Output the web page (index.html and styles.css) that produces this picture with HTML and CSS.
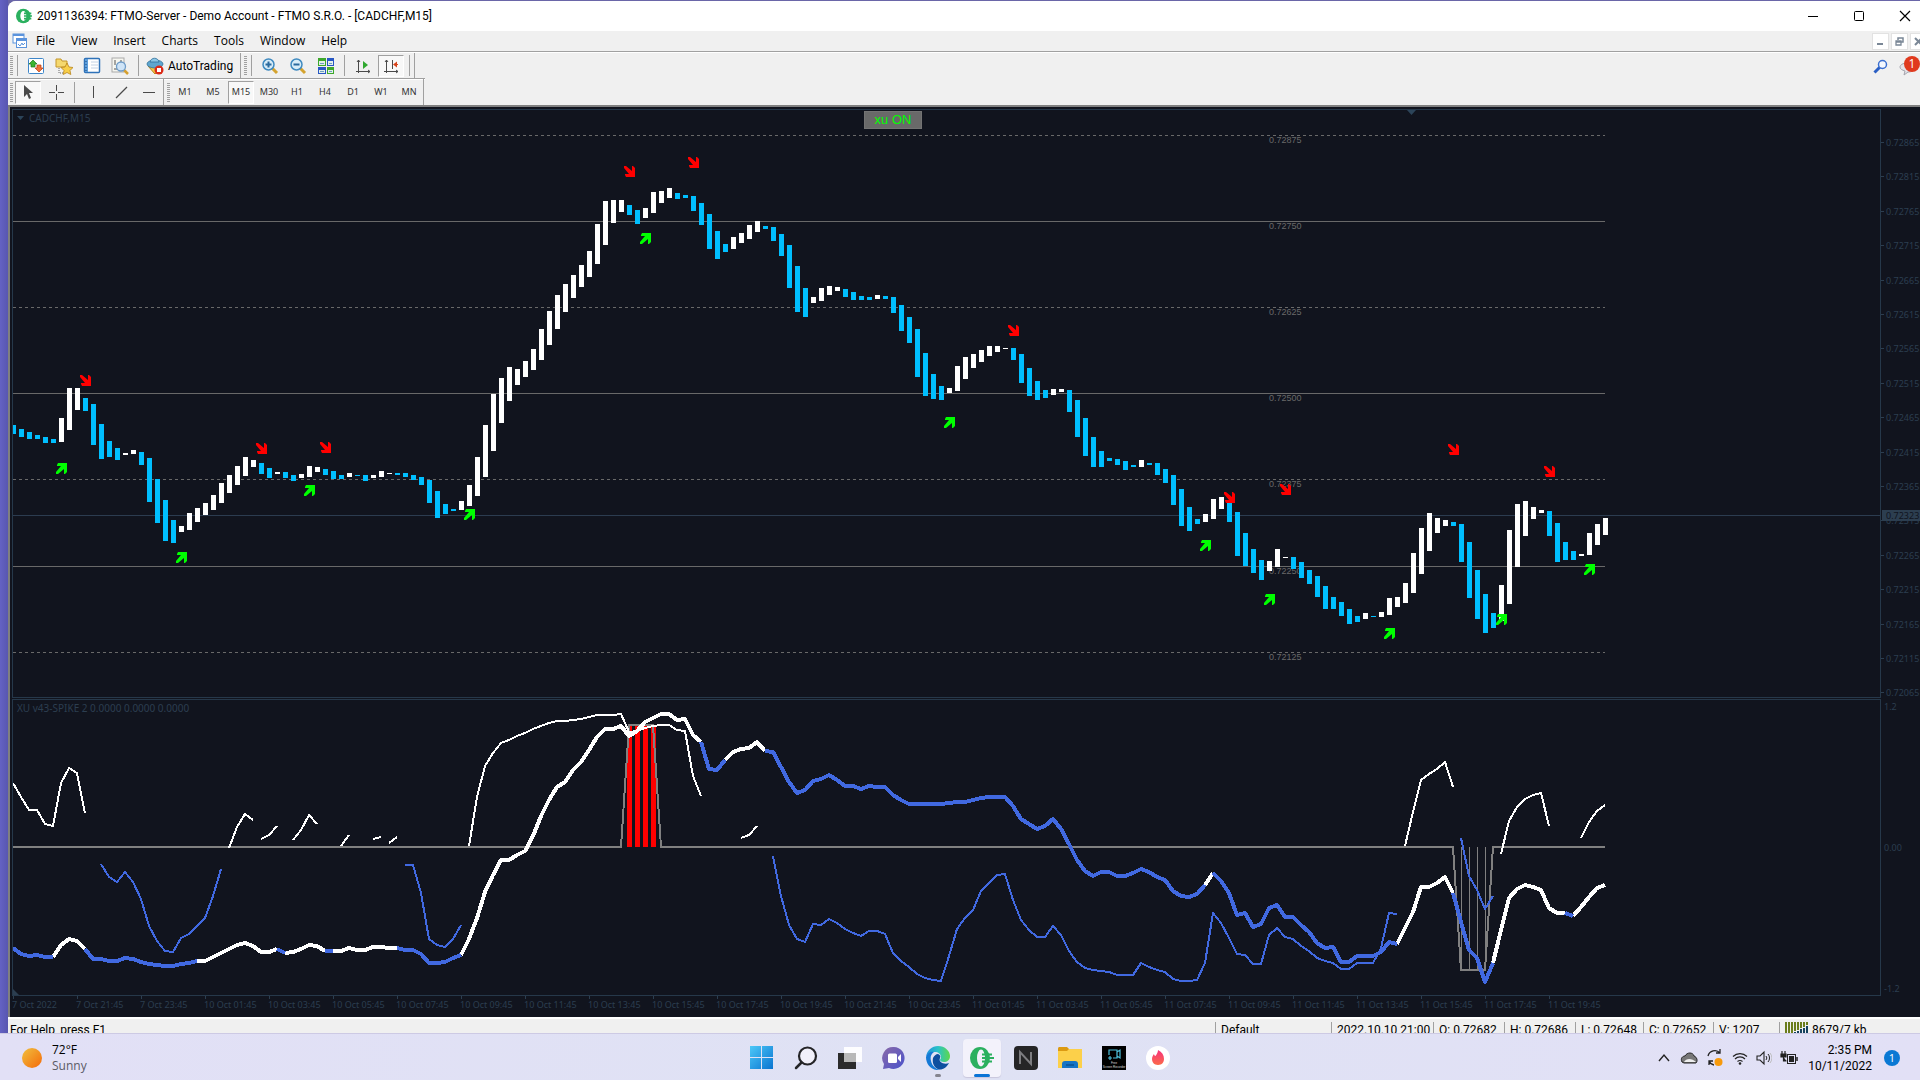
FILE: index.html
```html
<!DOCTYPE html>
<html lang="en">
<head>
<meta charset="utf-8">
<title>2091136394: FTMO-Server - Demo Account</title>
<link rel="stylesheet" href="styles.css">
</head>
<body>
<main class="window">
  <header class="titlebar">
    <svg class="app-logo" width="16" height="16" viewBox="0 0 24 24"><ellipse cx="11" cy="12" rx="11" ry="11" fill="#2bb05f"/><ellipse cx="11" cy="12" rx="4.500" ry="7.500" fill="#fff"/><path d="M12 8h11M12 12h12M12 16h11" stroke="#2bb05f" stroke-width="2.500"/></svg>
    <h1 class="title">2091136394: FTMO-Server - Demo Account - FTMO S.R.O. - [CADCHF,M15]</h1>
    <div class="caption-buttons">
      <button aria-label="Minimize"><svg width="12" height="12"><path d="M1 6.500h10" stroke="#000"/></svg></button>
      <button aria-label="Maximize"><svg width="12" height="12"><rect x="1.500" y="1.500" width="9" height="9" rx="1" fill="none" stroke="#000"/></svg></button>
      <button aria-label="Close"><svg width="12" height="12"><path d="M1 1l10 10M11 1L1 11" stroke="#000" stroke-width="1.200"/></svg></button>
    </div>
  </header>

  <nav class="menubar">
    <svg class="mdi-icon" width="16" height="16"><rect x="1" y="1" width="11" height="9" fill="#fff" stroke="#5b93dc"/><path d="M1 2h11" stroke="#5b93dc" stroke-width="2"/><rect x="4.500" y="5.500" width="10" height="9" fill="#fff" stroke="#5b93dc"/><path d="M4 7h11" stroke="#5b93dc" stroke-width="2"/><path d="M6 11l2 2 2-3 1 2 2-2" fill="none" stroke="#5b93dc"/></svg>
    <button>File</button><button>View</button><button>Insert</button><button>Charts</button><button>Tools</button><button>Window</button><button>Help</button>
    <div class="mdi-buttons">
      <button aria-label="Minimize chart"><svg width="9" height="9"><path d="M1 7h6" stroke="#7a8796" stroke-width="2"/></svg></button>
      <button aria-label="Restore chart"><svg width="9" height="9"><path d="M3 3V1h5v4H6" fill="none" stroke="#7a8796" stroke-width="1.500"/><path d="M1 4h5v4H1zM1 5h5" fill="none" stroke="#7a8796" stroke-width="1.300"/></svg></button>
      <button aria-label="Close chart"><svg width="9" height="9"><path d="M1 1l7 7M8 1L1 8" stroke="#7a8796" stroke-width="2"/></svg></button>
    </div>
  </nav>

  <div class="toolbars">
    <div class="toolbar standard">
      <span class="grip"></span><span class="sep"></span>
      <button class="tool" aria-label="Market watch"><svg width="18" height="18"><rect x="1.500" y="1.500" width="15" height="15" rx="1" fill="#fff" stroke="#3f86c8"/><path d="M6 3l4 4H8v3H4V7H2z" fill="#3cb531" stroke="#1c7a1a" stroke-width=".7"/><path d="M12 15l-4-4h2V8h4v3h2z" fill="#f0713a" stroke="#b83a10" stroke-width=".7"/></svg></button>
      <button class="tool" aria-label="Navigator"><svg width="18" height="18"><path d="M1 2h5l1 2h5v6H1z" fill="#f5d86e" stroke="#c4962a"/><path d="M4 11v5h4" fill="none" stroke="#666" stroke-dasharray="1 1"/><path d="M12 6l2 4 4 .5-3 3 .8 4L12 15.500 8.200 17.500 9 13.500l-3-3 4-.5z" fill="#f8cf4a" stroke="#b8841a" stroke-width=".8"/></svg></button>
      <button class="tool" aria-label="Data window"><svg width="18" height="18"><rect x="1.500" y="1.500" width="15" height="14" rx="1" fill="#fff" stroke="#2f72b8" stroke-width="1.500"/><rect x="2" y="2" width="3" height="13" fill="#5e9edb"/><path d="M8 5h7M8 8h7M8 11h7" stroke="#c3d2e4"/><path d="M3 4v10" stroke="#16447c" stroke-dasharray="1 2"/></svg></button>
      <button class="tool" aria-label="Strategy tester"><svg width="18" height="18"><rect x="1" y="1" width="12" height="14" fill="#f6f6f0" stroke="#aaa"/><path d="M4 3v5M10 3v4M3 12h4" stroke="#555"/><path d="M13 13l4 4" stroke="#d6a02e" stroke-width="2.500"/><circle cx="10" cy="9.500" r="4.500" fill="#cfe4f7" stroke="#6f9cc8" stroke-width="1.300"/></svg></button>
      <span class="sep"></span>
      <button class="tool auto"><svg width="18" height="18"><path d="M2 9l7 8 7-7z" fill="#f3c545" stroke="#b98419"/><ellipse cx="9" cy="7" rx="8" ry="4" fill="#5fa6cf" stroke="#2f7099" stroke-width=".8"/><path d="M4 5c1-5 8-5 9 0z" fill="#8cc6e6" stroke="#2f7099" stroke-width=".8"/><circle cx="13" cy="13" r="4.500" fill="#db2a18"/><rect x="11" y="11" width="4" height="4" fill="#fff"/></svg>AutoTrading</button>
      <span class="edge"></span><span class="grip"></span><span class="sep"></span>
      <button class="tool" aria-label="Zoom in"><svg width="18" height="18"><path d="M11 11l5 5" stroke="#d4a32f" stroke-width="3"/><circle cx="7.500" cy="7.500" r="5.500" fill="#d8edf8" stroke="#3f8ac0" stroke-width="1.500"/><path d="M4.500 7.500h6M7.500 4.500v6" stroke="#2a6a9e" stroke-width="2"/></svg></button>
      <button class="tool" aria-label="Zoom out"><svg width="18" height="18"><path d="M11 11l5 5" stroke="#d4a32f" stroke-width="3"/><circle cx="7.500" cy="7.500" r="5.500" fill="#d8edf8" stroke="#3f8ac0" stroke-width="1.500"/><path d="M4.500 7.500h6" stroke="#2a6a9e" stroke-width="2"/></svg></button>
      <button class="tool" aria-label="Tile windows"><svg width="18" height="18"><path d="M1 1h8v8H1zM10 10h7v7h-7z" fill="#3da82b"/><path d="M10 1h7v8h-7zM1 10h8v7H1z" fill="#2857c4"/><path d="M2 4h6v4H2zM11 4h5v4h-5zM2 13h6v3H2zM11 13h5v3h-5z" fill="#e4f0ea"/><path d="M3 6.500h4M12 6.500h3M3 14.500h4M12 14.500h3" stroke="#6f9fc0"/></svg></button>
      <span class="sep"></span>
      <button class="tool" aria-label="Auto scroll"><svg width="18" height="18"><path d="M4.500 3v13M2 14.500h14M3 5l1.500-2L6 5M14 13l2 1.500-2 1.500" fill="none" stroke="#4a4a4a"/><path d="M9 4l5 4-5 4z" fill="#2fa82f"/></svg></button>
      <button class="tool pressed" aria-label="Chart shift"><svg width="18" height="18"><path d="M4.500 3v13M2 14.500h14M3 5l1.500-2L6 5M14 13l2 1.500-2 1.500M10.500 3v9" fill="none" stroke="#4a4a4a"/><path d="M11 7.500l4-3v6z" fill="#d8431b"/><path d="M12 7.500h4" stroke="#d8431b"/></svg></button>
      <span class="sep"></span><span class="edge"></span>
    </div>
    <div class="toolbar drawing">
      <span class="grip"></span>
      <button class="tool pressed" aria-label="Cursor"><svg width="18" height="18"><path d="M5 2v12l3-3 2 5 2-1-2-5h4z" fill="#4a4a4a"/></svg></button>
      <button class="tool" aria-label="Crosshair"><svg width="18" height="18"><path d="M9.500 2v6M9.500 11v6M2 9.500h6M11 9.500h6" stroke="#4a4a4a"/></svg></button>
      <span class="sep"></span>
      <button class="tool" aria-label="Vertical line"><svg width="18" height="18"><path d="M9.500 3v12" stroke="#4a4a4a"/></svg></button>
      <button class="tool" aria-label="Trendline"><svg width="18" height="18"><path d="M4 15L15 4" stroke="#4a4a4a" stroke-width="1.300"/></svg></button>
      <button class="tool" aria-label="Horizontal line"><svg width="18" height="18"><path d="M3 9.500h12" stroke="#4a4a4a"/></svg></button>
      <span class="edge"></span><span class="grip"></span>
      <button class="tool">M1</button><button class="tool">M5</button><button class="tool pressed">M15</button><button class="tool">M30</button><button class="tool">H1</button><button class="tool">H4</button><button class="tool">D1</button><button class="tool">W1</button><button class="tool">MN</button>
      <span class="edge"></span>
    </div>
    <div class="side-tools">
      <button aria-label="Search"><svg width="16" height="16"><path d="M1.500 13.500L7 8" stroke="#2a5fc4" stroke-width="3"/><circle cx="9.500" cy="5.500" r="4" fill="#f4f8ff" stroke="#3b6fd0" stroke-width="1.500"/></svg></button>
      <button class="messages" aria-label="Messages"><svg width="20" height="20"><path d="M8 6c4 0 7 2 7 5s-3 4-6 4l-4 3 1-4C3 13 1 12 1 10s3-4 7-4z" fill="#e4e4ea" stroke="#a5a5ad"/></svg><span class="count">1</span></button>
    </div>
  </div>

  <section class="chart">
    <div class="panel price">
      <div class="panel-head"><svg width="8" height="5"><path d="M0 0h7L3.500 4z" fill="#2c4459"/></svg>CADCHF,M15</div>
      <svg id="price-plot" class="plot"></svg>
      <button class="xu">xu ON</button>
      <svg class="shift-mark" width="10" height="5"><path d="M0 0h9L4.500 5z" fill="#2c4459"/></svg>
    </div>
    <svg id="price-axis" class="axis"></svg>
    <div class="panel spike">
      <div class="panel-head">XU v43-SPIKE 2 0.0000 0.0000 0.0000</div>
      <svg id="spike-plot" class="plot"></svg>
    </div>
    <svg id="spike-axis" class="axis"></svg>
    <svg id="time-axis" class="time-axis"></svg>
  </section>

  <footer class="status">
    <span class="help">For Help, press F1</span>
    <span class="cell profile">Default</span>
    <span class="cell date">2022.10.10 21:00</span>
    <span class="cell open">O: 0.72682</span>
    <span class="cell open">H: 0.72686</span>
    <span class="cell low">L: 0.72648</span>
    <span class="cell close">C: 0.72652</span>
    <span class="cell volume">V: 1207</span>
    <span class="cell traffic"><svg width="24" height="16"><path d="M1 0v16M4 0v13M7 0v11M10 0v9M13 0v8M16 0v6M19 0v5M22 0v3" stroke="#6b7d1c" stroke-width="2"/><path d="M4 14v2M7 12v4M10 10v6M13 9v7M16 7v9M19 6v10M22 4v12" stroke="#16425f" stroke-width="2"/></svg>8679/7 kb</span>
  </footer>
</main>

<footer class="taskbar">
  <button class="weather"><span class="sun"></span><span class="weather-text"><span>72°F</span><span class="muted">Sunny</span></span></button>
  <div class="apps">
    <button aria-label="Start"><svg width="24" height="24"><defs><linearGradient id="win" x1="0" y1="0" x2="1" y2="1"><stop offset="0" stop-color="#4cc8f8"/><stop offset="1" stop-color="#0a74d0"/></linearGradient></defs><path d="M0 0h11v11H0zM12 0h11v11H12zM0 12h11v11H0zM12 12h11v11H12z" fill="url(#win)"/></svg></button>
    <button aria-label="Search"><svg width="24" height="24"><circle cx="13.500" cy="10" r="8.500" fill="#f1f0fa" stroke="#252528" stroke-width="2.200"/><path d="M7.500 16.500L2 22" stroke="#252528" stroke-width="2.500" stroke-linecap="round"/></svg></button>
    <button aria-label="Task view"><svg width="24" height="24"><rect x="0" y="7" width="18" height="16" fill="#2c2c2c"/><rect x="6" y="1" width="18" height="15" fill="#fff" opacity=".92"/><rect x="6" y="7" width="12" height="9" fill="#b9b9b9"/></svg></button>
    <button aria-label="Chat"><svg width="24" height="24"><defs><linearGradient id="chat" x1="0" y1="0" x2="1" y2="1"><stop offset="0" stop-color="#8a6aa8"/><stop offset="1" stop-color="#4a52cc"/></linearGradient></defs><path d="M12 1a11 11 0 1 1-5 21L1 23l1-5A11 11 0 0 1 12 1z" fill="url(#chat)"/><rect x="6" y="7.500" width="9" height="9.500" rx="1.500" fill="#fff"/><path d="M16 11l3-3v8l-3-3z" fill="#fff"/></svg></button>
    <button class="running" aria-label="Edge"><svg width="24" height="24"><defs><linearGradient id="edge" x1="0" y1="0" x2="1" y2="0"><stop offset="0" stop-color="#1f8fdd"/><stop offset=".5" stop-color="#2ac3c8"/><stop offset="1" stop-color="#5fd84a"/></linearGradient></defs><path d="M0 11C1 4 6 0 12 0c7 0 12 5 12 10 0 4-3 6-6 6-2 0-4-1-4-2s1-1 1-3c0-3-3-5-6-5-4 0-8 2-9 5z" fill="url(#edge)"/><path d="M0 11c1-4 5-6 8-5-3 2-4 5-3 9 1 5 5 8 9 9C6 25 0 19 0 11z" fill="#1479d6"/><path d="M7 12c1-2 3-4 5-4 2 1 3 2 2 4-2 4 4 7 9 5-2 4-6 7-10 6.500C8 22 6 17 7 12z" fill="#0d4f9f"/></svg></button>
    <button class="active" aria-label="FTMO MetaTrader"><svg width="24" height="24"><ellipse cx="10" cy="12" rx="10" ry="11" fill="#2bb05f"/><ellipse cx="11" cy="12" rx="4" ry="8.500" fill="#f1f0fa"/><path d="M12 8.500h10M12 12h12M12 15.500h10M17 6v12" stroke="#2bb05f" stroke-width="1.800"/></svg></button>
    <button aria-label="NinjaTrader"><svg width="24" height="24"><rect width="24" height="24" rx="4" fill="#252526"/><path d="M6 18V6l11 12V6" fill="none" stroke="#7d7d80" stroke-width="2"/></svg></button>
    <button aria-label="File Explorer"><svg width="24" height="24"><path d="M0 3c0-2 1-2 2-2h7l2 2v6H0z" fill="#dc9a12"/><path d="M0 5h9l2-2h13v19H0z" fill="#fcd04a"/><path d="M4 22v-4c0-2 1-3 3-3h10c2 0 3 1 3 3v4z" fill="#1674c4"/><path d="M8 19h8" stroke="#0c5292" stroke-width="1.500"/></svg></button>
    <button aria-label="Free Screen Recorder"><svg class="recorder" width="24" height="24"><rect width="24" height="24" fill="#000"/><path d="M7 9V4h8v8h-4M15 6l3-2v8l-3-2M8 10v4M6 12h4" fill="none" stroke="#4cc0dc" stroke-width="1.200"/><text x="12" y="18" text-anchor="middle" font-size="3" fill="#ddd">Free</text><text x="12" y="22" text-anchor="middle" font-size="3" fill="#ddd">Screen Recorder</text></svg></button>
    <button aria-label="Tinder"><svg width="24" height="24"><defs><linearGradient id="flame" x1="0" y1="0" x2="0" y2="1"><stop offset="0" stop-color="#f7327c"/><stop offset="1" stop-color="#fb6a4a"/></linearGradient></defs><circle cx="12" cy="12" r="12" fill="#fff"/><path d="M12 4c4 2 6 5 6 9 0 3-2 6-6 6s-6-3-6-6c0-2 1-4 2-5 0 1 1 2 1.500 2C11 8 12 6 12 4z" fill="url(#flame)"/></svg></button>
  </div>
  <div class="tray">
    <button aria-label="Show hidden icons"><svg width="16" height="16"><path d="M3 11l5-6 5 6" fill="none" stroke="#222" stroke-width="1.400"/></svg></button>
    <button aria-label="OneDrive"><svg width="18" height="16"><path d="M2 12C0 8 3 6 5 6c2-4 8-4 9 0 3 1 4 5 2 7H4z" fill="#777" stroke="#222"/><path d="M4 12c2-4 8-4 12 0z" fill="#eee"/></svg></button>
    <button aria-label="Update"><svg width="18" height="18"><path d="M2 7a7 7 0 0 1 12-3M14 0v4h-4M8 16a7 7 0 0 1-5-4M3 16v-4h4" fill="none" stroke="#222" stroke-width="1.300"/><circle cx="12.500" cy="13" r="4" fill="#f79a0c"/></svg></button>
    <button aria-label="Network"><svg width="16" height="16"><path d="M1 6.500a10 10 0 0 1 14 0M3 9a7 7 0 0 1 10 0M5.500 11.500a4 4 0 0 1 5 0" fill="none" stroke="#222" stroke-width="1.200"/><circle cx="8" cy="13.500" r="1.300" fill="#222"/></svg></button>
    <button aria-label="Volume"><svg width="16" height="16"><path d="M1 6h3l4-4v12l-4-4H1z" fill="none" stroke="#222" stroke-width="1.100"/><path d="M10 6a3 3 0 0 1 0 4M12 4a6 6 0 0 1 0 8" fill="none" stroke="#222"/><path d="M14 3a8 8 0 0 1 0 10" fill="none" stroke="#bbb"/></svg></button>
    <button aria-label="Battery"><svg width="18" height="16"><path d="M2 1v3M5 1v3M1 4h5v3H1zM3.500 7v4h3" fill="#222" stroke="#222" stroke-width="1.200"/><rect x="7.500" y="4.500" width="8" height="9" fill="none" stroke="#222"/><rect x="9" y="6" width="5" height="6" fill="#222"/><path d="M17 7v4" stroke="#222" stroke-width="1.500"/></svg></button>
    <button class="clock"><span>2:35 PM</span><span>10/11/2022</span></button>
    <span class="notice">1</span>
  </div>
</footer>
<script src="chart.js"></script>
</body>
</html>
```
FILE: styles.css
```css
* { box-sizing: border-box; }
body {
  margin: 0;
  min-height: 100vh;
  display: flex;
  flex-direction: column;
  overflow: hidden;
  background: linear-gradient(90deg, #6462c4, #5856b0 8px, #6a66a8 8px);
  color: #000;
  font: 12px/16px "Open Sans", "Noto Sans", sans-serif;
}
button {
  margin: 0;
  padding: 0;
  border: 0;
  background: none;
  color: inherit;
  font: inherit;
}
svg { display: block; flex: none; }

.window {
  flex: 1;
  display: flex;
  flex-direction: column;
  margin: 1px 0 0 8px;
  overflow: hidden;
  border-top-left-radius: 8px;
  background: #f0f0f0;
}
.titlebar {
  display: flex;
  align-items: center;
  height: 30px;
  padding-left: 8px;
  background: #fff;
}
.title { margin: 0 0 0 5px; font: 400 12px/16px Roboto, sans-serif; white-space: nowrap; }
.caption-buttons { display: flex; gap: 34px; margin-left: auto; padding-right: 9px; }

.menubar {
  display: flex;
  align-items: center;
  height: 21px;
  padding-left: 4px;
  border-bottom: 1px solid #a0a0a0;
}
.menubar > button { padding: 0 8px; }
.mdi-buttons { display: flex; gap: 2px; margin: 0 -7px 0 auto; }
.mdi-buttons button {
  display: grid;
  place-items: center;
  width: 17px;
  height: 17px;
  border: 1px solid #e2e2e2;
  background: #fff;
}

.toolbars { position: relative; border-top: 1px solid #fff; }
.toolbar { display: flex; align-items: center; width: max-content; height: 25px; }
.drawing { height: 27px; border-top: 1px solid #a0a0a0; box-shadow: inset 0 1px #fff; }
.grip {
  width: 3px;
  height: 19px;
  margin: 0 3px 0 2px;
  background: repeating-linear-gradient(#a0a0a0 0 1px, #f0f0f0 1px 2px);
}
.drawing .grip { margin-right: 1px; }
.sep { width: 1px; height: 21px; margin: 0 4px; background: #a0a0a0; }
.standard .grip + .sep { margin-left: 1px; }
.edge { width: 1px; align-self: stretch; margin-right: 1px; background: #a0a0a0; }
.tool { display: grid; place-items: center; width: 28px; height: 22px; }
.auto {
  display: flex;
  gap: 4px;
  width: auto;
  padding: 0 7px 0 3px;
  font: 12px/16px Roboto, sans-serif;
}
.tool.pressed {
  width: 26px;
  margin: 0 1px;
  border: 1px solid;
  border-color: #a0a0a0 #fff #fff #a0a0a0;
  background: #f8f8f8;
}
.drawing .tool { color: #333; font: 9px/12px "Noto Sans", sans-serif; }
.drawing .tool { height: 23px; }
.side-tools { position: absolute; top: 4px; right: 1px; display: flex; gap: 10px; }
.messages { position: relative; }
.count {
  position: absolute;
  top: -1px;
  left: 5px;
  width: 16px;
  height: 16px;
  border-radius: 8px;
  background: #e03a1e;
  color: #fff;
  text-align: center;
}

.chart {
  flex: 1;
  display: grid;
  grid-template-columns: minmax(0, 1fr) 39px;
  grid-template-rows: 589px 297px 20px;
  row-gap: 1px;
  padding: 2px 0 0 2px;
  border: solid #808080;
  border-width: 2px 0 0 2px;
  background: #11141e;
  color: #2c3e50;
  font: 9px/12px "Noto Sans", sans-serif;
}
.panel { position: relative; overflow: hidden; border: 1px solid #26384a; }
.panel-head {
  position: absolute;
  top: 2px;
  left: 4px;
  display: flex;
  align-items: center;
  gap: 4px;
  font-size: 10px;
}
.plot { width: 100%; height: 100%; }
.axis { width: 39px; height: 100%; }
.time-axis { grid-column: 1 / -1; width: 100%; height: 20px; margin-top: -1px; }
.axis text, .time-axis text { fill: #2c3e50; }
.axis .tag-text { fill: #11141e; }
.level-label { fill: #696969; font: 9px "Liberation Sans", sans-serif; }
.xu {
  position: absolute;
  top: 1px;
  left: 851px;
  width: 58px;
  height: 18px;
  border: 1px solid #737373;
  background: #696969;
  color: #00ff00;
  font: 13px/16px "Liberation Sans", sans-serif;
}
.shift-mark { position: absolute; top: 0; left: 1394px; }

.status {
  display: flex;
  height: 16px;
  overflow: hidden;
  border-top: 2px solid #fff;
  font: 12px/22px Roboto, sans-serif;
  white-space: nowrap;
}
.help { flex: 1; padding-left: 2px; }
.cell { margin-top: 3px; padding-left: 5px; border-left: 1px solid #a0a0a0; line-height: 16px; }
.profile { width: 116px; }
.date { width: 102px; }
.open { width: 71px; }
.low { width: 68px; }
.close { width: 70px; }
.volume { width: 66px; }
.traffic { display: flex; gap: 3px; width: 141px; }

.taskbar {
  display: grid;
  grid-template-columns: 1fr auto 1fr;
  align-items: center;
  height: 48px;
  border-top: 1px solid #cdcae4;
  background: linear-gradient(90deg, #e2e0f6, #dfe2f4 50%, #e2e0f6);
}
.weather { display: flex; align-items: center; gap: 10px; padding-left: 22px; text-align: left; }
.weather-text, .clock { display: grid; }
.muted { color: #5a5a66; }
.sun { width: 20px; height: 20px; border-radius: 10px; background: linear-gradient(135deg, #f0c040, #f56a08); }
.apps { display: flex; gap: 6px; }
.apps button { position: relative; display: grid; place-items: center; width: 38px; height: 38px; border-radius: 4px; }
.apps .active { background: #f3f2fb; box-shadow: 0 1px 1px #c9c7dc; }
.apps .active::after, .apps .running::after {
  content: "";
  position: absolute;
  bottom: 0;
  left: 11px;
  width: 16px;
  height: 3px;
  border-radius: 2px;
  background: #0a74d6;
}
.apps .running::after { left: 16px; width: 6px; background: #85858f; }
.recorder { font-family: "Liberation Sans", sans-serif; }
.tray { display: flex; align-items: center; justify-content: flex-end; gap: 8px; padding-right: 20px; }
.clock { margin-left: 2px; font-family: Roboto, sans-serif; text-align: right; }
.notice {
  width: 16px;
  height: 16px;
  margin-left: 4px;
  border-radius: 8px;
  background: #0a78d4;
  color: #fff;
  font-size: 11px;
  text-align: center;
}
```
FILE: chart.js
```js
const NS = "http://www.w3.org/2000/svg";
const WHITE = "#ffffff", SKY = "#00bfff", ROYAL = "#4169e1", GREY = "#808080";
const FRAME = "#2c3e50";
const LEFT = 13, PRICE_TOP = 110, SPIKE_TOP = 700;

// Each bar: top-bottom, in plot pixels; a leading w marks a rising bar.
const bars = `425-434 429-437 432-439 435-439 437-443 439-443 w418-442 w388-430 w388-410 398-411
404-445 424-459 441-457 448-460 w453-455 w450-454 452-465 458-502 479-523 500-541
520-543 w526-532 w513-530 w508-522 w503-515 w495-510 w483-503 w475-493 w466-485 w457-476
w460-467 463-474 468-478 w472-474 472-478 475-481 w474-478 w466-477 w467-472 469-475
471-479 475-479 w473-477 475-476 475-481 w475-478 w471-477 w473-474 473-475 473-477
475-480 477-485 480-503 491-518 504-514 509-511 w501-510 w485-506 w457-496 w425-477
w394-451 w378-423 w367-401 w369-385 w361-377 w349-370 w329-360 w311-345 w295-329 w284-312
w275-298 w265-287 w251-277 w224-264 w201-245 w200-223 w200-212 205-215 210-224 w208-218
w192-213 w191-203 w188-198 193-199 195-198 196-211 203-225 214-249 231-259 244-252
w237-249 w233-243 w225-239 w221-232 226-229 227-241 234-256 245-288 266-312 288-317
w297-303 w288-301 w286-295 w287-291 289-297 292-300 296-300 297-300 w295-299 296-299
297-313 305-331 317-343 329-377 353-396 374-399 386-400 w388-393 w366-391 w357-379
w354-368 w350-362 w346-356 w346-352 w348-349 348-360 354-383 368-396 381-400 390-398
w389-395 w389-392 390-412 400-437 418-456 437-467 451-467 458-461 459-465 461-470
465-467 w460-467 463-465 463-475 469-483 475-505 489-526 507-531 519-524 w514-522
w499-519 w497-509 500-522 512-556 533-566 549-573 560-580 w561-571 w549-567 w557-558
557-569 562-578 570-584 576-597 586-609 597-609 602-616 609-624 616-622 w613-619
616-617 w612-617 w598-615 w597-607 w583-603 w553-593 w528-574 w513-551 w518-533 w520-526
522-526 524-562 542-598 570-619 594-633 613-628 w585-621 w530-604 w504-567 w501-536
w507-519 w510-513 511-536 523-562 542-560 551-560 w554-556 w533-555 w524-545 w518-535`.split(/\s+/);

const sellArrows = [[9, 375], [31, 443], [39, 442], [77, 166], [85, 157], [125, 325], [152, 492], [159, 484], [180, 444], [192, 466]];
const buyArrows = [[6, 463], [21, 552], [37, 485], [57, 509], [79, 233], [117, 417], [149, 540], [157, 594], [172, 628], [186, 614], [197, 564]];
const levels = [["0.72875", 135, true], ["0.72750", 221], ["0.72625", 307, true], ["0.72500", 393], ["0.72375", 479, true], ["0.72250", 566], ["0.72125", 652, true]];

// Indicator runs: first bar index, then one y value per bar.
const upper = [
  [0, 783, 797, 810, 810, 824, 826, 783, 768, 773, 813],
  [27, 848, 827, 814, 820], [31, 839, 835, 826], [35, 840, 830, 815, 824], [41, 846, 835], [45, 839, 837], [47, 843, 837],
  [57, 846, 797, 766, 753, 743, 740, 736, 733, 729, 726, 723, 721, 721, 720, 719, 717, 715, 715, 715, 714, 732, 731, 728, 726, 725, 725, 730, 731, 776, 796],
  [91, 838, 835, 826], [174, 846, 812, 780, 774, 769, 762, 787],
  [186, 854, 821, 807, 799, 795, 793, 826], [196, 838, 822, 811, 805]
];
const lower = [
  [11, 864, 877, 882, 872, 882, 899, 926, 941, 951, 952, 938, 934, 926, 918, 896, 869],
  [49, 865, 865, 893, 939, 945, 947, 939, 925],
  [95, 856, 896, 925, 939, 942, 924, 925, 919, 923, 929, 933, 936, 931, 931, 934, 953, 961, 967, 974, 978, 980, 981, 956, 929, 918, 910, 891, 883, 875, 874, 900, 920, 930, 937, 937, 926, 935, 951, 962, 968, 970, 971, 972, 975, 975, 975, 963, 967, 970, 972, 979, 981, 981, 980, 963, 913, 923, 938, 954, 955, 964, 964, 935, 928, 937, 939, 946, 951, 958, 961, 963, 969, 969, 963, 963, 963, 948, 913, 914],
  [181, 838, 876, 890, 909, 896]
];
const trend = [948, 954, 956, 955, 957, 957, 945, 939, 941, 949, 959, 959, 961, 961, 958, 959, 962, 964, 965, 966,
  966, 964, 963, 961, 961, 957, 953, 949, 945, 943, 946, 952, 952, 949, 953, 952, 949, 945, 946, 951,
  951, 951, 948, 950, 950, 947, 947, 948, 948, 950, 950, 954, 963, 963, 962, 958, 955, 939, 918, 892,
  875, 860, 860, 855, 851, 836, 816, 800, 787, 782, 770, 762, 750, 737, 729, 729, 726, 736, 731, 722,
  718, 714, 714, 720, 719, 735, 742, 769, 770, 760, 752, 749, 748, 742, 751, 752, 767, 782, 793, 790,
  781, 779, 775, 780, 786, 786, 789, 786, 787, 787, 795, 800, 804, 804, 804, 804, 804, 803, 802, 802,
  800, 798, 797, 797, 797, 806, 819, 824, 829, 826, 819, 829, 844, 860, 871, 876, 872, 872, 876, 876,
  873, 869, 872, 877, 880, 891, 896, 897, 894, 885, 873, 881, 893, 915, 913, 927, 924, 908, 905, 917,
  917, 925, 932, 943, 948, 947, 962, 962, 956, 956, 956, 952, 942, 944, 928, 912, 887, 887, 883, 877,
  893, 922, 950, 958, 982, 963, 930, 898, 889, 885, 887, 890, 908, 913, 913, 916, 907, 897, 888, 885];
// Bar ranges in which the trend line is blue; it is white elsewhere.
const falling = [[0, 5], [9, 23], [33, 34], [39, 40], [48, 56], [86, 89], [94, 149], [150, 173], [180, 185], [194, 195]];

function add(parent, tag, attrs, text) {
  const node = document.createElementNS(NS, tag);
  for (const key in attrs) node.setAttribute(key, attrs[key]);
  if (text) node.textContent = text;
  parent.appendChild(node);
  return node;
}
function layer(id, top, left) {
  return add(document.getElementById(id), "g", { transform: `translate(${-left} ${-top})` });
}
const x = i => LEFT + 8 * i;
const points = (start, ys) => ys.map((y, k) => `${x(start + k)},${y}`).join(" ");
function line(parent, start, ys, stroke, width) {
  add(parent, "polyline", { points: points(start, ys), fill: "none", stroke, "stroke-width": width, "stroke-linejoin": "round", "shape-rendering": "crispEdges" });
}

const price = layer("price-plot", PRICE_TOP, LEFT);
add(price, "rect", { x: LEFT, y: 515, width: "100%", height: 1, fill: "#2c3c50" });
for (const [label, y, dashed] of levels) {
  add(price, "text", { x: 1269, y: y + 8, class: "level-label" }, label);
  add(price, "path", { d: `M${LEFT} ${y + 0.5}H1605`, stroke: "#696969", "stroke-dasharray": dashed ? "3 3" : "none" });
}
bars.forEach((bar, i) => {
  const up = bar[0] === "w";
  const [top, bottom] = bar.replace("w", "").split("-").map(Number);
  add(price, "rect", { x: x(i) - 2, y: top, width: 5, height: bottom - top, fill: up ? WHITE : SKY });
});
for (const [i, y] of sellArrows)
  add(price, "path", { transform: `translate(${x(i) - 5} ${y})`, d: "M2 11H11V2L9 0H8V5L2 0H0V2L5 8H1V9Z", fill: "#ff0000" });
for (const [i, y] of buyArrows)
  add(price, "path", { transform: `translate(${x(i) - 5} ${y})`, d: "M2 0H11V9L9 11H8V6L2 11H0V9L5 3H1V2Z", fill: "#00ff00" });

const priceAxis = layer("price-axis", 109, 0);
for (let k = 0; k < 17; k++) {
  const y = Math.round(142 + 34.4 * k);
  add(priceAxis, "rect", { x: 0, y, width: 3, height: 1, fill: FRAME });
  add(priceAxis, "text", { x: 5, y: y + 4 }, (0.72865 - 0.0005 * k).toFixed(5));
}
add(priceAxis, "rect", { x: 1, y: 510, width: 38, height: 11, fill: FRAME });
add(priceAxis, "text", { x: 5, y: 519, class: "tag-text" }, "0.72323");

const spike = layer("spike-plot", SPIKE_TOP, LEFT);
for (let i = 77; i <= 80; i++) add(spike, "rect", { x: x(i) - 2, y: 726, width: 5, height: 121, fill: "#ff0000" });
for (let i = 181; i <= 184; i++) add(spike, "rect", { x: x(i), y: 847, width: 1, height: 123, fill: GREY });
add(spike, "path", { d: `M13 847H${x(76)}L${x(77)} 725H${x(80)}L${x(81)} 847H${x(180)}L${x(181)} 970H${x(184)}L${x(185)} 847H1605`, fill: "none", stroke: GREY, "stroke-width": 2, "shape-rendering": "crispEdges" });
for (const [start, ...ys] of upper) line(spike, start, ys, WHITE, 2);
for (const [start, ...ys] of lower) line(spike, start, ys, ROYAL, 2);
let from = 0;
for (const [start, end] of [...falling, [199, 199]]) {
  if (start > from) line(spike, from, trend.slice(from, start + 1), WHITE, 4);
  from = end;
}
for (const [start, end] of falling) line(spike, start, trend.slice(start, end + 1), ROYAL, 4);
add(spike, "path", { d: "M13 989v6h6z", fill: FRAME });

const spikeAxis = layer("spike-axis", 699, 0);
for (const [label, y] of [["1.2", 710], ["0.00", 851], ["-1.2", 992]])
  add(spikeAxis, "text", { x: 3, y }, label);

const timeAxis = layer("time-axis", 996, 12);
const times = ["7 Oct 2022", "7 Oct 21:45", "7 Oct 23:45"];
for (const day of [10, 11])
  for (let hour = 1; hour < (day === 10 ? 24 : 20); hour += 2)
    times.push(`${day} Oct ${String(hour).padStart(2, "0")}:45`);
times.forEach((label, k) => {
  add(timeAxis, "rect", { x: LEFT + 64 * k, y: 996, width: 1, height: 3, fill: FRAME });
  add(timeAxis, "text", { x: LEFT - 1 + 64 * k, y: 1008 }, label);
});
```
